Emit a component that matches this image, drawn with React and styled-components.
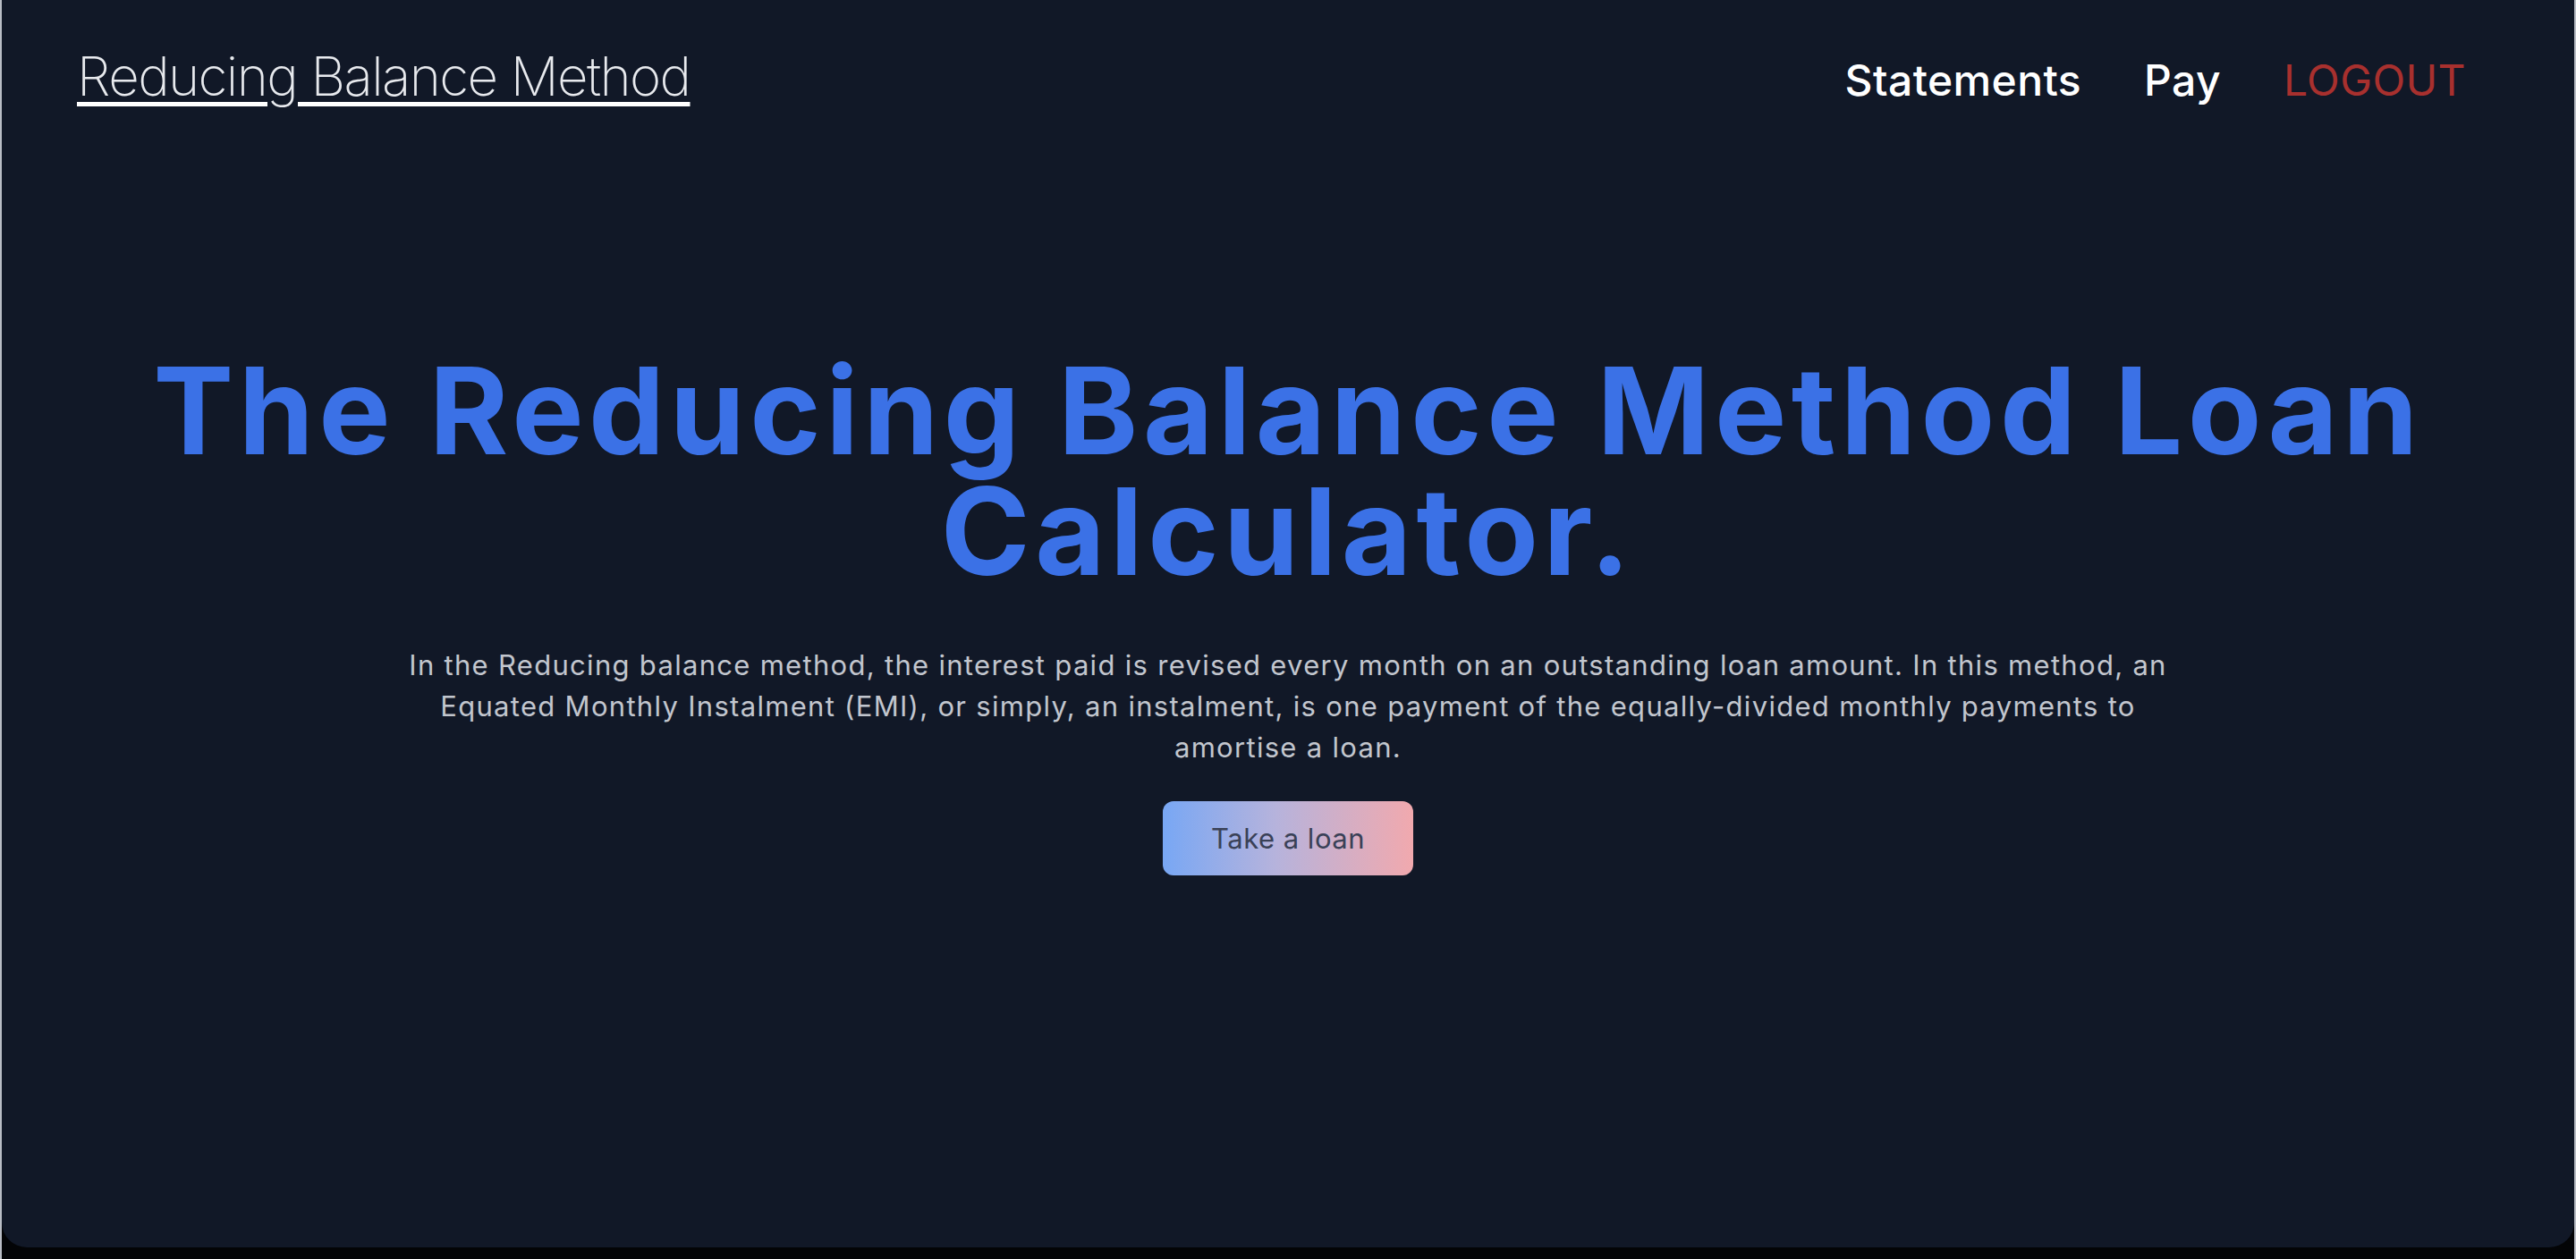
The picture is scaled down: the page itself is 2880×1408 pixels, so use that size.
import styled, { createGlobalStyle } from "styled-components";

const GlobalStyle = createGlobalStyle`
  html, body {
    margin: 0;
    padding: 0;
    background: #000;
  }
  body {
    font-family: Inter, "Noto Sans", "Liberation Sans", sans-serif;
  }
`;

const App = () => {
    return (
        <>
            <GlobalStyle />
            <Shell>
                <Window>
                    <Header>
                        <Logo href="#">Reducing Balance Method</Logo>
                        <Nav>
                            <NavLink href="#">Statements</NavLink>
                            <NavLink href="#">Pay</NavLink>
                            <NavLink href="#" $danger>LOGOUT</NavLink>
                        </Nav>
                    </Header>
                    <Hero>
                        <Title>The Reducing Balance Method Loan Calculator.</Title>
                        <Lead>
                            In the Reducing balance method, the interest paid is revised every month on an
                            outstanding loan amount. In this method, an Equated Monthly Instalment (EMI), or
                            simply, an instalment, is one payment of the equally-divided monthly payments to
                            amortise a loan.
                        </Lead>
                        <LoanButton>Take a loan</LoanButton>
                    </Hero>
                </Window>
            </Shell>
        </>
    );
};

export default App;

const Shell = styled.div`
  height: 1408px;
  box-sizing: border-box;
  border-left: 2px solid #b9bdc5;
  border-right: 2px solid #b9bdc5;
  background: #030406;
`;

const Window = styled.div`
  height: 1395px;
  background: #111827;
  border-radius: 0 0 28px 28px;
  display: flex;
  flex-direction: column;
`;

const Header = styled.header`
  display: flex;
  justify-content: space-between;
  align-items: baseline;
  padding: 49px 121px 0 84px;
`;

const Logo = styled.a`
  font-size: 60px;
  line-height: 1.2;
  font-weight: 200;
  letter-spacing: -1.6px;
  color: #e8eaee;
  text-decoration: underline;
  text-decoration-thickness: 5px;
  text-underline-offset: 7px;
  text-decoration-color: #ffffff;
`;

const Nav = styled.nav`
  display: flex;
  align-items: baseline;
  gap: 70px;
`;

const NavLink = styled.a`
  font-size: 48px;
  line-height: 1.2;
  letter-spacing: 0.4px;
  font-weight: ${(p) => (p.$danger ? 400 : 500)};
  color: ${(p) => (p.$danger ? "#a8302e" : "#ffffff")};
  text-decoration: none;
`;

const Hero = styled.main`
  display: flex;
  flex-direction: column;
  align-items: center;
  padding-top: 271px;
`;

const Title = styled.h1`
  margin: 0;
  max-width: 2700px;
  font-size: 135px;
  line-height: 1;
  font-weight: 700;
  color: #3b71e6;
  text-align: center;
  letter-spacing: 5.5px;
`;

const Lead = styled.p`
  margin: 59px 0 0;
  max-width: 2010px;
  font-size: 31px;
  line-height: 46px;
  letter-spacing: 1.3px;
  color: #c2c6ce;
  text-align: center;
`;

const LoanButton = styled.button`
  margin-top: 37px;
  height: 83px;
  padding: 0 54px;
  border: none;
  border-radius: 12px;
  background: linear-gradient(90deg, #78a7f4 0%, #b6b3dc 45%, #f1a9ae 100%);
  color: #3a4157;
  font-family: inherit;
  font-size: 31px;
  letter-spacing: 0.5px;
  cursor: pointer;
`;
